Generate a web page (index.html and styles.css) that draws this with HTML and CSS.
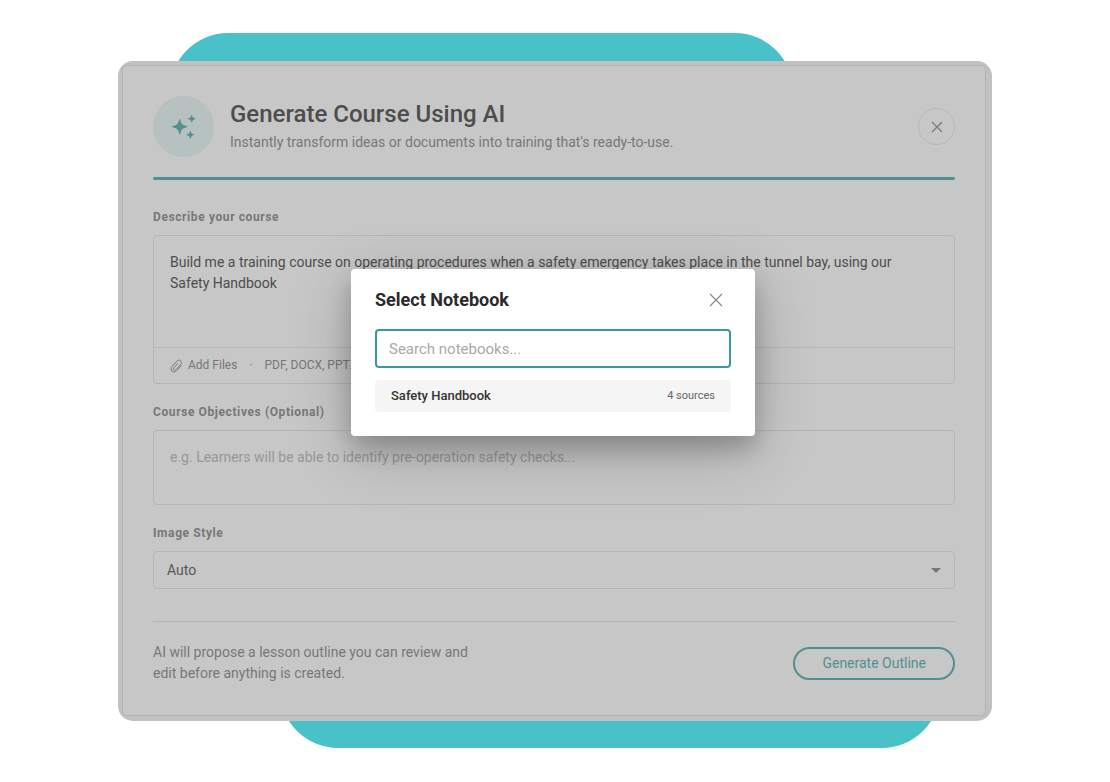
FILE: index.html
```
<!DOCTYPE html>
<html lang="en">
<head>
    <meta charset="UTF-8">
    <meta name="viewport" content="width=device-width, initial-scale=1.0">
    <title>Generate Course Using AI</title>
    <link rel="stylesheet" href="styles.css">
</head>
<body>
    <main class="stage">
        <div class="frame">
            <form class="card">
                <!-- Header section -->
                <header class="card-header">
                    <div class="badge">
                        <svg width="61" height="61" viewBox="0 0 61 61" aria-hidden="true">
                            <path d="M26.7 22.4 L28.3 26.8 Q29 28.4 30.6 29.1 L35 30.7 L30.6 32.3 Q29 33 28.3 34.6 L26.7 39 L25.1 34.6 Q24.4 33 22.8 32.3 L18.4 30.7 L22.8 29.1 Q24.4 28.4 25.1 26.8 Z"/>
                            <path d="M38.7 18.4 L39.9 21.5 L43 22.7 L39.9 23.9 L38.7 27 L37.5 23.9 L34.4 22.7 L37.5 21.5 Z"/>
                            <path d="M37.3 34.4 L38.5 37.5 L41.6 38.7 L38.5 39.9 L37.3 43 L36.1 39.9 L33 38.7 L36.1 37.5 Z"/>
                        </svg>
                    </div>
                    <div class="heading">
                        <h1>Generate Course Using AI</h1>
                        <p>Instantly transform ideas or documents into training that's ready-to-use.</p>
                    </div>
                    <button type="button" class="close-round" aria-label="Close">
                        <svg width="12" height="12" viewBox="0 0 12 12" aria-hidden="true"><path d="M1 1 L11 11 M11 1 L1 11"/></svg>
                    </button>
                </header>

                <!-- Course form -->
                <div class="field">
                    <label for="describe">Describe your course</label>
                    <div class="prompt">
                        <textarea id="describe" class="prompt-text">Build me a training course on operating procedures when a safety emergency takes place in the tunnel bay, using our Safety Handbook</textarea>
                        <div class="prompt-footer">
                            <button type="button" class="add-files">
                                <svg width="13" height="14" viewBox="0 0 13 14" aria-hidden="true"><path d="M11.6 6.2 L6.6 11.7 C5.3 13.1 3.3 13.3 2 12.1 C0.7 10.9 0.7 8.9 2 7.5 L6.9 2.1 C7.9 1 9.5 0.8 10.6 1.8 C11.7 2.8 11.7 4.4 10.7 5.5 L6 10.6 C5.4 11.3 4.5 11.4 3.9 10.8 C3.3 10.2 3.4 9.3 4 8.6 L8.2 4.1"/></svg>
                                Add Files
                            </button>
                            <span class="dot">·</span>
                            <span>PDF, DOCX, PPTX</span>
                        </div>
                    </div>
                </div>

                <div class="field">
                    <label for="objectives">Course Objectives (Optional)</label>
                    <textarea id="objectives" class="objectives" placeholder="e.g. Learners will be able to identify pre-operation safety checks..."></textarea>
                </div>

                <div class="field">
                    <label for="image-style">Image Style</label>
                    <div class="select-wrap">
                        <select id="image-style">
                            <option>Auto</option>
                        </select>
                    </div>
                </div>

                <footer class="card-footer">
                    <p>AI will propose a lesson outline you can review and edit before anything is created.</p>
                    <button type="submit" class="generate">Generate Outline</button>
                </footer>
            </form>

            <!-- Notebook picker -->
            <div class="overlay">
                <section class="dialog" role="dialog" aria-labelledby="dialog-title">
                    <div class="dialog-header">
                        <h2 id="dialog-title">Select Notebook</h2>
                        <button type="button" class="dialog-close" aria-label="Close">
                            <svg width="14" height="14" viewBox="0 0 14 14" aria-hidden="true"><path d="M1 1 L13 13 M13 1 L1 13"/></svg>
                        </button>
                    </div>
                    <input type="text" class="search" placeholder="Search notebooks..." aria-label="Search notebooks">
                    <button type="button" class="notebook">
                        <span>Safety Handbook</span>
                        <span class="sources">4 sources</span>
                    </button>
                </section>
            </div>
        </div>
    </main>
</body>
</html>
```
FILE: styles.css
```
* {
    box-sizing: border-box;
}
body {
    margin: 0;
    background: #fff;
    font-family: Roboto, sans-serif;
    font-size: 14px;
    line-height: 21px;
    color: #777;
}
h1, h2, p {
    margin: 0;
}
button, input, textarea, select {
    font: inherit;
    color: inherit;
    margin: 0;
}
button {
    padding: 0;
    border: 0;
    background: none;
    cursor: pointer;
}
svg {
    display: block;
    fill: none;
}
.stage {
    position: relative;
    z-index: 0;
    max-width: 874px;
    margin: 33px auto;
    padding: 28px 0 27px;
}
/* Teal shapes behind the frame */
.stage::before, .stage::after {
    content: "";
    position: absolute;
    z-index: -1;
    height: 120px;
    border-radius: 58px;
    background: #48c2c8;
}
.stage::before {
    top: 0;
    left: 52px;
    right: 199px;
}
.stage::after {
    bottom: 0;
    left: 162px;
    right: 52px;
}
.frame {
    position: relative;
    padding: 4px 6px 5px 4px;
    border-radius: 15px;
    background: #c1c1c1;
}
.card {
    padding: 30px 30px 31px;
    border: 1px solid #b3b3b3;
    border-radius: 4px;
    background: #c7c7c7;
}
.card-header {
    display: flex;
    align-items: center;
    padding-bottom: 20px;
    margin-bottom: 30px;
    position: relative;
}
.card-header::after {
    content: "";
    position: absolute;
    left: 0;
    right: 0;
    bottom: -3px;
    height: 3px;
    border-radius: 2px;
    background: #538f8e;
}
.badge {
    border-radius: 50%;
    background: #b7c1c0;
    margin-right: 16px;
}
.badge svg {
    fill: #538f8e;
}
.heading {
    flex: 1;
    padding-bottom: 4px;
}
.heading h1 {
    font-size: 24px;
    line-height: 35px;
    font-weight: 500;
    color: #4d4d4d;
}
.close-round {
    display: grid;
    place-items: center;
    width: 37px;
    height: 37px;
    border: 1px solid #b8b8b8;
    border-radius: 50%;
}
.close-round svg {
    stroke: #7c7c7c;
    stroke-width: 1.4;
}
.field {
    margin-bottom: 18px;
}
.field label {
    display: block;
    margin-bottom: 8px;
    font-size: 12px;
    line-height: 20px;
    font-weight: 700;
    letter-spacing: 0.05em;
}
.prompt, .objectives, .select-wrap {
    border: 1px solid #b5b5b5;
    border-radius: 4px;
}
.prompt-text, .objectives {
    display: block;
    width: 100%;
    padding: 16px 24px 16px 16px;
    background: none;
    resize: none;
    outline: none;
}
.prompt-text {
    height: 111px;
    border: 0;
    color: #4d4d4d;
}
.prompt-footer {
    display: flex;
    align-items: center;
    gap: 12px;
    height: 36px;
    padding: 0 16px;
    border-top: 1px solid #b8b8b8;
    font-size: 12px;
}
.add-files {
    display: flex;
    align-items: center;
    gap: 5px;
}
.add-files svg {
    stroke: #777;
}
.objectives {
    height: 75px;
}
.objectives::placeholder {
    color: #979797;
    opacity: 1;
}
.select-wrap {
    position: relative;
}
.select-wrap::after {
    content: "";
    position: absolute;
    top: 16px;
    right: 13px;
    border: 5px solid transparent;
    border-top-color: #777;
    border-bottom: 0;
    pointer-events: none;
}
.select-wrap select {
    display: block;
    width: 100%;
    height: 36px;
    padding: 0 13px;
    border: 0;
    background: none;
    appearance: none;
    color: #585858;
}
.card-footer {
    display: flex;
    align-items: center;
    justify-content: space-between;
    margin-top: 32px;
    padding-top: 20px;
    border-top: 1px solid #b3b3b3;
}
.card-footer p {
    max-width: 330px;
}
.generate {
    height: 33px;
    padding: 0 27px;
    border: 2px solid #538f8e;
    border-radius: 17px;
    color: #538f8e;
}
/* Dialog over the card */
.overlay {
    position: absolute;
    inset: 0;
    display: flex;
    justify-content: center;
    align-items: flex-start;
    padding: 208px 16px 0 12px;
}
.dialog {
    width: 404px;
    padding: 20px 24px 24px;
    border-radius: 4px;
    background: #fff;
    box-shadow: 0 12px 24px rgba(0, 0, 0, 0.22), 0 16px 64px rgba(0, 0, 0, 0.2);
}
.dialog-header {
    display: flex;
    align-items: center;
    justify-content: space-between;
    margin-bottom: 19px;
    padding-right: 8px;
}
.dialog-header h2 {
    font-size: 18px;
    line-height: 21px;
    font-weight: 700;
    color: #2a2a2a;
}
.dialog-close svg {
    stroke: #888;
    stroke-width: 1.2;
}
.search {
    display: block;
    width: 100%;
    height: 39px;
    margin-bottom: 12px;
    padding: 0 12px;
    border: 2px solid #399a9a;
    border-radius: 4px;
    background: #fff;
    font-size: 15px;
    outline: none;
}
.search::placeholder {
    color: #a9a9a9;
    opacity: 1;
}
.notebook {
    display: flex;
    align-items: center;
    justify-content: space-between;
    width: 100%;
    height: 32px;
    padding: 0 16px 2px;
    border-radius: 4px;
    background: #f5f5f5;
    font-size: 13px;
    font-weight: 500;
    color: #333;
}
.sources {
    font-size: 11px;
    font-weight: 400;
    color: #666;
}
```
